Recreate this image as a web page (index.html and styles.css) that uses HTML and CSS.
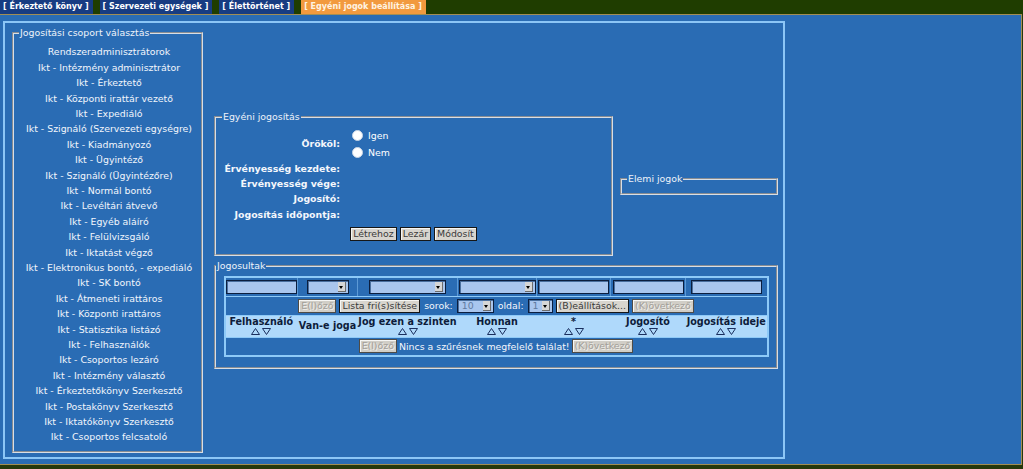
FILE: index.html
```html
<!DOCTYPE html>
<html lang="hu">
<head>
<meta charset="utf-8">
<title>Egyéni jogok beállítása</title>
<link rel="stylesheet" href="styles.css">
</head>
<body>
<nav class="tabs">
  <a class="tab">[ Érkeztető könyv ]</a>
  <a class="tab">[ Szervezeti egységek ]</a>
  <a class="tab">[ Élettörténet ]</a>
  <a class="tab tab-active">[ Egyéni jogok beállítása ]</a>
</nav>
<main class="main">
  <div class="panel">
    <fieldset class="box groups">
      <legend>Jogosítási csoport választás</legend>
      <ul class="group-list">
        <li>Rendszeradminisztrátorok</li>
        <li>Ikt - Intézmény adminisztrátor</li>
        <li>Ikt - Érkeztető</li>
        <li>Ikt - Központi irattár vezető</li>
        <li>Ikt - Expediáló</li>
        <li>Ikt - Szignáló (Szervezeti egységre)</li>
        <li>Ikt - Kiadmányozó</li>
        <li>Ikt - Ügyintéző</li>
        <li>Ikt - Szignáló (Ügyintézőre)</li>
        <li>Ikt - Normál bontó</li>
        <li>Ikt - Levéltári átvevő</li>
        <li>Ikt - Egyéb aláíró</li>
        <li>Ikt - Felülvizsgáló</li>
        <li>Ikt - Iktatást végző</li>
        <li>Ikt - Elektronikus bontó, - expediáló</li>
        <li>Ikt - SK bontó</li>
        <li>Ikt - Átmeneti irattáros</li>
        <li>Ikt - Központi irattáros</li>
        <li>Ikt - Statisztika listázó</li>
        <li>Ikt - Felhasználók</li>
        <li>Ikt - Csoportos lezáró</li>
        <li>Ikt - Intézmény választó</li>
        <li>Ikt - Érkeztetőkönyv Szerkesztő</li>
        <li>Ikt - Postakönyv Szerkesztő</li>
        <li>Ikt - Iktatókönyv Szerkesztő</li>
        <li>Ikt - Csoportos felcsatoló</li>
      </ul>
    </fieldset>

    <div class="right">
      <fieldset class="box individual">
        <legend>Egyéni jogosítás</legend>
        <div class="form">
          <div class="label label-mid">Örököl:</div>
          <div class="radios">
            <label class="radio"><input type="radio" name="inherit"><span>Igen</span></label>
            <label class="radio"><input type="radio" name="inherit"><span>Nem</span></label>
          </div>
          <div class="label">Érvényesség kezdete:</div><div class="value"></div>
          <div class="label">Érvényesség vége:</div><div class="value"></div>
          <div class="label">Jogosító:</div><div class="value"></div>
          <div class="label">Jogosítás időpontja:</div><div class="value"></div>
          <div class="actions">
            <button class="btn" type="button">Létrehoz</button>
            <button class="btn" type="button">Lezár</button>
            <button class="btn" type="button">Módosít</button>
          </div>
        </div>
      </fieldset>

      <fieldset class="box elemental">
        <legend>Elemi jogok</legend>
      </fieldset>

      <fieldset class="box holders">
        <legend>Jogosultak</legend>
        <table class="grid">
          <colgroup>
            <col class="c1"><col class="c2"><col class="c3"><col class="c4"><col class="c5"><col class="c6"><col class="c7">
          </colgroup>
          <tr class="filters">
            <td><input class="field" type="text"></td>
            <td><span class="select w42"><select><option></option></select><span class="select-arrow"></span></span></td>
            <td><span class="select w77"><select><option></option></select><span class="select-arrow"></span></span></td>
            <td><span class="select w77"><select><option></option></select><span class="select-arrow"></span></span></td>
            <td><input class="field" type="text"></td>
            <td><input class="field" type="text"></td>
            <td><input class="field" type="text"></td>
          </tr>
          <tr class="bar-row">
            <td colspan="7">
              <div class="bar">
                <button class="btn" type="button" disabled>E(l)őző</button>
                <button class="btn" type="button">Lista fri(s)sítése</button>
                <span class="bar-text">sorok:</span>
                <span class="select w37"><select><option>10</option></select><span class="select-arrow"></span></span>
                <span class="bar-text">oldal:</span>
                <span class="select w25"><select><option>1</option></select><span class="select-arrow"></span></span>
                <button class="btn" type="button">(B)eállítások...</button>
                <button class="btn" type="button" disabled>(K)övetkező</button>
              </div>
            </td>
          </tr>
          <tr class="head">
            <th><span class="th-title">Felhasználó</span><span class="sort"><svg width="9" height="7" viewBox="0 0 9 7"><polygon points="0.5,6.5 4.5,0.5 8.5,6.5"/></svg><svg width="9" height="7" viewBox="0 0 9 7"><polygon points="0.5,0.5 8.5,0.5 4.5,6.5"/></svg></span></th>
            <th><span class="th-title">Van-e joga</span></th>
            <th><span class="th-title">Jog ezen a szinten</span><span class="sort"><svg width="9" height="7" viewBox="0 0 9 7"><polygon points="0.5,6.5 4.5,0.5 8.5,6.5"/></svg><svg width="9" height="7" viewBox="0 0 9 7"><polygon points="0.5,0.5 8.5,0.5 4.5,6.5"/></svg></span></th>
            <th><span class="th-title">Honnan</span><span class="sort"><svg width="9" height="7" viewBox="0 0 9 7"><polygon points="0.5,6.5 4.5,0.5 8.5,6.5"/></svg><svg width="9" height="7" viewBox="0 0 9 7"><polygon points="0.5,0.5 8.5,0.5 4.5,6.5"/></svg></span></th>
            <th><span class="th-title">*</span><span class="sort"><svg width="9" height="7" viewBox="0 0 9 7"><polygon points="0.5,6.5 4.5,0.5 8.5,6.5"/></svg><svg width="9" height="7" viewBox="0 0 9 7"><polygon points="0.5,0.5 8.5,0.5 4.5,6.5"/></svg></span></th>
            <th><span class="th-title">Jogosító</span><span class="sort"><svg width="9" height="7" viewBox="0 0 9 7"><polygon points="0.5,6.5 4.5,0.5 8.5,6.5"/></svg><svg width="9" height="7" viewBox="0 0 9 7"><polygon points="0.5,0.5 8.5,0.5 4.5,6.5"/></svg></span></th>
            <th><span class="th-title">Jogosítás ideje</span><span class="sort"><svg width="9" height="7" viewBox="0 0 9 7"><polygon points="0.5,6.5 4.5,0.5 8.5,6.5"/></svg><svg width="9" height="7" viewBox="0 0 9 7"><polygon points="0.5,0.5 8.5,0.5 4.5,6.5"/></svg></span></th>
          </tr>
          <tr class="bar-row">
            <td colspan="7">
              <div class="bar bar-tight">
                <button class="btn" type="button" disabled>E(l)őző</button>
                <span class="bar-text">Nincs a szűrésnek megfelelő találat!</span>
                <button class="btn" type="button" disabled>(K)övetkező</button>
              </div>
            </td>
          </tr>
        </table>
      </fieldset>
    </div>
  </div>
</main>
</body>
</html>
```

FILE: styles.css
```css
* { box-sizing: border-box; }

html, body { margin: 0; padding: 0; }

body {
  width: 1023px;
  height: 469px;
  overflow: hidden;
  background: #26380c;
  font-family: "DejaVu Sans", Verdana, sans-serif;
  font-size: 9.4px;
  color: #ffffff;
}

/* ---------- top tabs ---------- */
.tabs {
  display: flex;
  gap: 7px;
  height: 14px;
  background: #1f3d00;
}

.tab {
  display: block;
  padding: 0 4px 0 3px;
  line-height: 14px;
  font-size: 8px;
  font-weight: bold;
  color: #ffffff;
  background: #173c82;
  white-space: nowrap;
}

.tab-active {
  background: #f29a3e;
  color: #fff4e2;
}

/* ---------- main area ---------- */
.main {
  display: block;
  width: 1022px;
  height: 451px;
  background: #2a6cb4;
  border: 1px solid #a28e54;
  border-left: 0;
  padding: 6px 0 0 3px;
}

.panel {
  display: flex;
  align-items: flex-start;
  width: max-content;
  border: 2px solid #8cc6f6;
  padding: 4px 5px 4px 7px;
}

.box {
  margin: 0;
  min-width: 0;
  border: 2px groove #d8dee6;
}

.box legend {
  padding: 0 1px;
  line-height: 12px;
  color: #eef3fa;
}

/* ---------- left group list ---------- */
.groups {
  width: 191px;
  padding: 5.3px 2px 6.3px 5px;
}

.group-list {
  list-style: none;
  margin: 0;
  padding: 0;
  text-align: center;
  line-height: 15.4px;
  white-space: nowrap;
  color: #f2f6fc;
}

/* ---------- right side ---------- */
.right {
  align-self: center;
  margin-left: 11px;
  display: grid;
  grid-template-columns: 399px 158px;
  column-gap: 7px;
  row-gap: 3.5px;
  align-items: center;
}

.individual {
  padding: 3.5px 6px 8px 6px;
}

.form {
  display: grid;
  grid-template-columns: 118px 1fr;
  column-gap: 8px;
}

.label {
  text-align: right;
  font-weight: bold;
  line-height: 15.4px;
  white-space: nowrap;
  color: #f4f7fc;
}

.label-mid { align-self: center; }

.radios {
  display: flex;
  flex-direction: column;
}

.radio {
  display: flex;
  align-items: center;
  gap: 5px;
  height: 17px;
}

.radio input {
  appearance: none;
  -webkit-appearance: none;
  width: 11px;
  height: 11px;
  margin: 0 0 0 4px;
  border: 1px solid #c9d6e6;
  border-radius: 50%;
  background: #ffffff;
}

.actions {
  grid-column: 1 / -1;
  height: 24px;
  display: flex;
  justify-content: center;
  align-items: center;
  gap: 3px;
}

.btn {
  height: 14px;
  padding: 0 2px;
  font-family: "DejaVu Sans", Verdana, sans-serif;
  font-size: 9.4px;
  line-height: 12px;
  color: #3a3a3a;
  background: #d8d5ce;
  border: 1px solid #161616;
  box-shadow: inset 1px 1px 0 #f6f6f4;
  border-radius: 0;
}

.btn:disabled {
  color: #a29e98;
  background: #d1cec7;
  border-color: #4e4b46;
  text-shadow: 1px 1px 0 #f2f0ec;
}

.elemental {
  padding: 0 5px 8px;
}

.holders {
  grid-column: 1 / -1;
  padding: 4.5px 0 10px;
}

/* ---------- grid table ---------- */
.grid {
  width: 543px;
  margin: 0 auto;
  table-layout: fixed;
  border-collapse: collapse;
  border: 2px solid #8ecaf8;
}

.c1 { width: 73px; }
.c2 { width: 60px; }
.c3 { width: 100px; }
.c4 { width: 79px; }
.c5 { width: 74px; }
.c6 { width: 75px; }
.c7 { width: 82px; }

.grid td,
.grid th {
  border: 1px solid #8ecaf8;
  padding: 0;
  text-align: center;
  vertical-align: middle;
}

.filters td {
  height: 19px;
  border-left-color: #5d9ad6;
  border-right-color: #5d9ad6;
}

.field {
  display: block;
  width: 71px;
  height: 14px;
  margin: 0 auto;
  padding: 0;
  font: inherit;
  background: #a9c6ee;
  border: 1px solid #0b1e3e;
  box-shadow: inset 1px 1px 0 #4a6f9e;
}

.select {
  position: relative;
  display: inline-block;
  vertical-align: middle;
}

.select select {
  appearance: none;
  -webkit-appearance: none;
  display: block;
  height: 14px;
  padding: 0 0 0 4px;
  font-family: "DejaVu Sans", Verdana, sans-serif;
  font-size: 9.4px;
  line-height: 12px;
  color: #5f7aa0;
  background: #a9c6ee;
  border: 1px solid #0b1e3e;
  border-radius: 0;
  box-shadow: inset 1px 1px 0 #4a6f9e;
}

.w42 select { width: 42px; }
.w77 select { width: 77px; }
.w37 select { width: 37px; }
.w25 select { width: 25px; }

.select-arrow {
  position: absolute;
  right: 3px;
  top: 2px;
  width: 8px;
  height: 10px;
  background: #d6d6d6;
  border-right: 1px solid #6c6c6c;
  border-bottom: 1px solid #6c6c6c;
}

.select-arrow::after {
  content: "";
  position: absolute;
  left: 1px;
  top: 4px;
  border-left: 2.5px solid transparent;
  border-right: 2.5px solid transparent;
  border-top: 3px solid #000000;
}

.bar-row td { height: 19px; }

.bar {
  display: flex;
  justify-content: center;
  align-items: center;
  gap: 3px;
  white-space: nowrap;
}

.bar-tight { gap: 1px; }

.bar-text {
  color: #f4f7fc;
  padding: 0 1px;
}

.head th {
  height: 22px;
  background: #afd9fb;
  border-left-color: #afd9fb;
  border-right-color: #afd9fb;
  color: #0d1c3a;
  font-size: 9.6px;
  font-weight: bold;
  line-height: 10px;
  white-space: nowrap;
}

.th-title { display: block; }

.sort {
  display: flex;
  justify-content: center;
  gap: 2px;
  margin-top: 1px;
}

.sort svg polygon {
  fill: none;
  stroke: #1a2f5e;
  stroke-width: 1;
}
```
